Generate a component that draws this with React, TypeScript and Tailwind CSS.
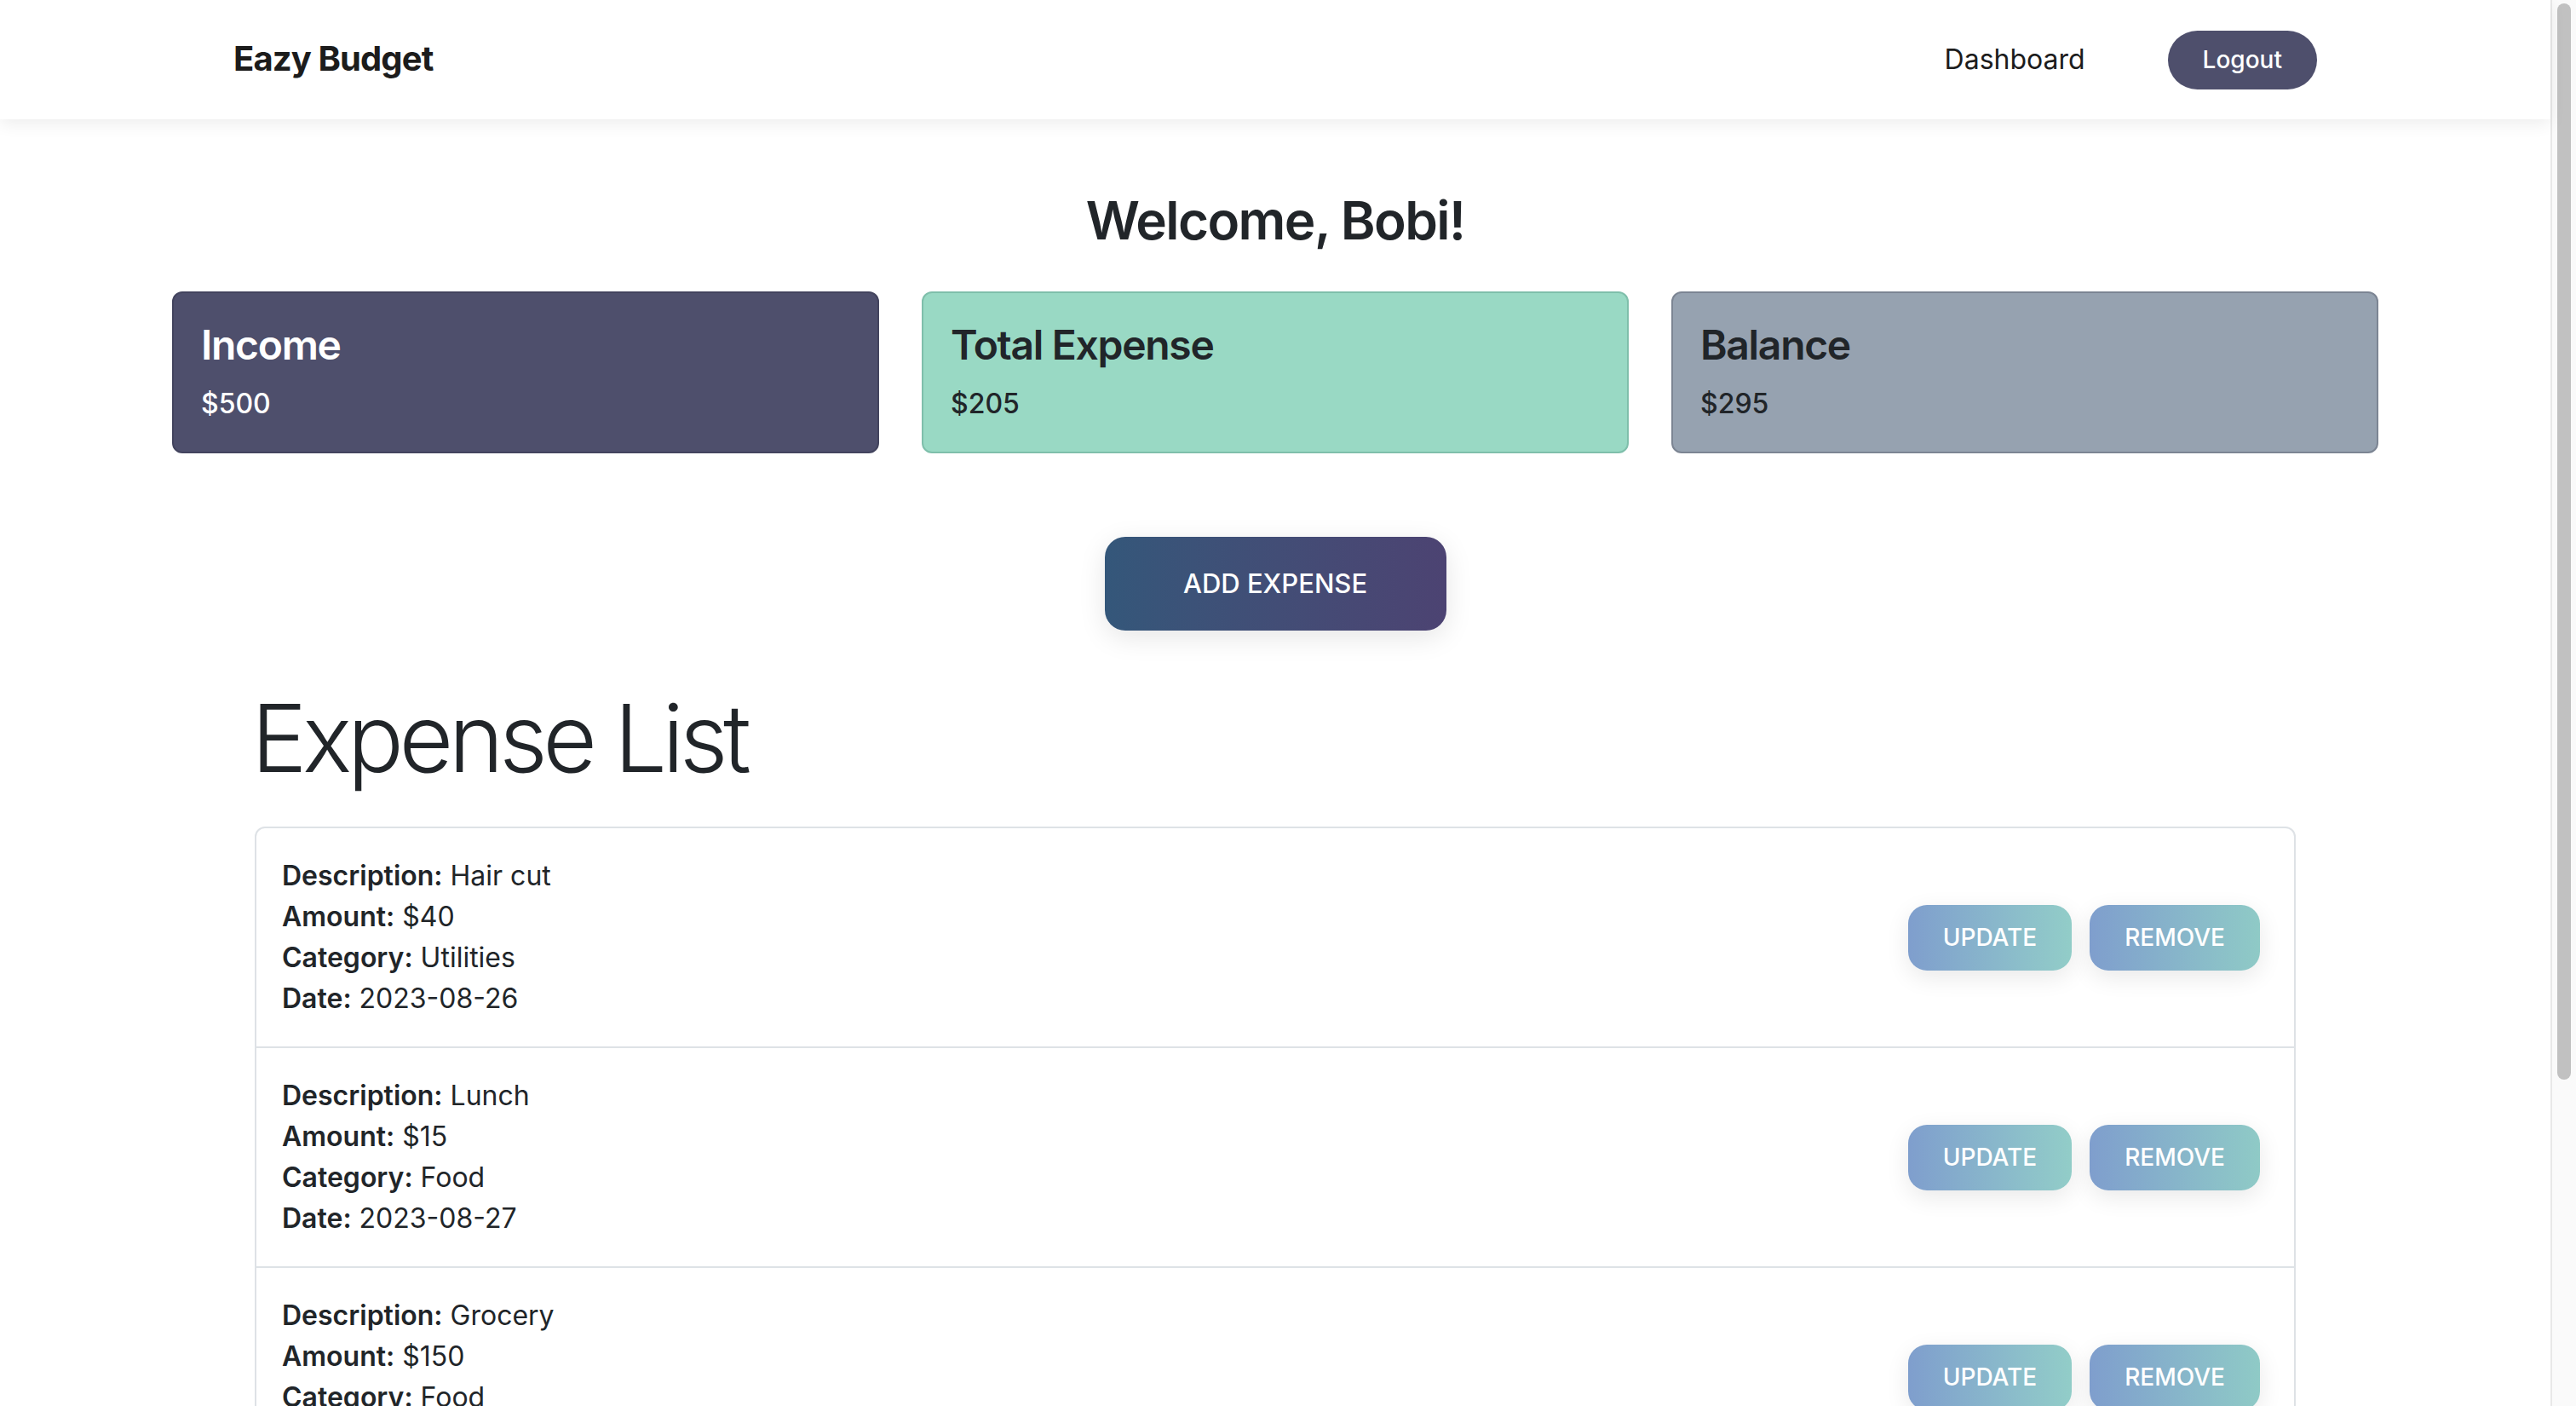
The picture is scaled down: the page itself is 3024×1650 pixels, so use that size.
import React from "react"

interface Expense {
    description: string
    amount: number
    category: string
    date: string
}

const expenses: Expense[] = [
    { description: "Hair cut", amount: 40, category: "Utilities", date: "2023-08-26" },
    { description: "Lunch", amount: 15, category: "Food", date: "2023-08-27" },
    { description: "Grocery", amount: 150, category: "Food", date: "2023-08-28" },
]

const Navbar = () => {
    return (
        <nav className="h-[140px] bg-white shadow-[0_6px_18px_rgba(0,0,0,0.07)] relative z-10">
            <div className="w-[2446px] mx-auto h-full flex items-center justify-between">
                <span className="text-[40px] font-bold text-[#1c1c1c] tracking-[-0.9px] -mt-[2px]">Eazy Budget</span>
                <div className="flex items-center gap-[97px]">
                    <a className="text-[32px] text-[#1c1c1c]">Dashboard</a>
                    <button className="h-[69px] px-[41px] rounded-full bg-[#4e4f6c] text-white text-[28px] font-medium">
                        Logout
                    </button>
                </div>
            </div>
        </nav>
    )
}

const SummaryCard = ({ title, value, className }: { title: string; value: string; className: string }) => {
    return (
        <div className={"border-2 rounded-[12px] p-[32px] " + className}>
            <h4 className="text-[48px] leading-[1.2] font-semibold tracking-[-1.3px] mb-[16px]">{title}</h4>
            <p className="text-[32px] leading-[48px] font-medium">{value}</p>
        </div>
    )
}

const ExpenseItem = ({ item, first }: { item: Expense; first: boolean }) => {
    return (
        <li className={"flex items-center justify-between pl-[32px] pr-[40px] py-[32px] " + (first ? "" : "border-t-2 border-[#dee2e6]")}>
            <div className="text-[32px] leading-[48px] text-[#212529] -ml-[2px]">
                <div><b className="font-semibold">Description:</b> {item.description}</div>
                <div><b className="font-semibold">Amount:</b> ${item.amount}</div>
                <div><b className="font-semibold">Category:</b> {item.category}</div>
                <div><b className="font-semibold">Date:</b> {item.date}</div>
            </div>
            <div className="flex gap-[21px]">
                <button className="h-[77px] px-[41px] rounded-[22px] text-white text-[28px] font-medium bg-gradient-to-r from-[#7f9ecd] to-[#92cdc8] shadow-[0_8px_28px_rgba(0,0,0,0.09)]">
                    UPDATE
                </button>
                <button className="h-[77px] px-[41px] rounded-[22px] text-white text-[28px] font-medium bg-gradient-to-r from-[#7f9ecd] to-[#8fcac6] shadow-[0_8px_28px_rgba(0,0,0,0.09)]">
                    REMOVE
                </button>
            </div>
        </li>
    )
}

const App = () => {
    return (
        <div className="h-[1650px] overflow-hidden flex bg-white font-['Inter',sans-serif] text-[#212529]">
            <div className="flex-1 min-w-0">
                <Navbar />

                <h2 className="mt-[82px] mb-[46px] text-center text-[62px] leading-[1.2] font-semibold tracking-[-1.6px]">
                    Welcome, Bobi!
                </h2>

                <div className="w-[2590px] mx-auto grid grid-cols-3 gap-[50px]">
                    <SummaryCard title="Income" value="$500" className="bg-[#4e4f6c] border-[#43445e] text-white" />
                    <SummaryCard title="Total Expense" value="$205" className="bg-[#99d9c4] border-[#7fbfab] text-[#212529]" />
                    <SummaryCard title="Balance" value="$295" className="bg-[#96a2b0] border-[#7c8593] text-[#212529]" />
                </div>

                <div className="flex justify-center mt-[98px]">
                    <button className="w-[401px] h-[110px] rounded-[24px] text-white text-[31px] font-medium bg-gradient-to-r from-[#34577a] to-[#4c4372] shadow-[0_8px_32px_rgba(0,0,0,0.1)]">
                        ADD EXPENSE
                    </button>
                </div>

                <div className="w-[2396px] mx-auto mt-[59px]">
                    <h1 className="text-[110px] leading-[1.22] font-light tracking-[-5.5px] mb-[37px] -ml-[4px]">Expense List</h1>
                    <ul className="border-2 border-[#dee2e6] rounded-t-[12px]">
                        {expenses.map((item, i) => (
                            <ExpenseItem key={i} item={item} first={i === 0} />
                        ))}
                    </ul>
                </div>
            </div>

            {/* scrollbar */}
            <div className="w-[30px] shrink-0 bg-[#fafafa] border-l-2 border-[#e8e8e8] pt-[4px] flex justify-center">
                <div className="w-[16px] h-[1263px] rounded-full bg-[#c1c1c1]"></div>
            </div>
        </div>
    )
}

export default App
